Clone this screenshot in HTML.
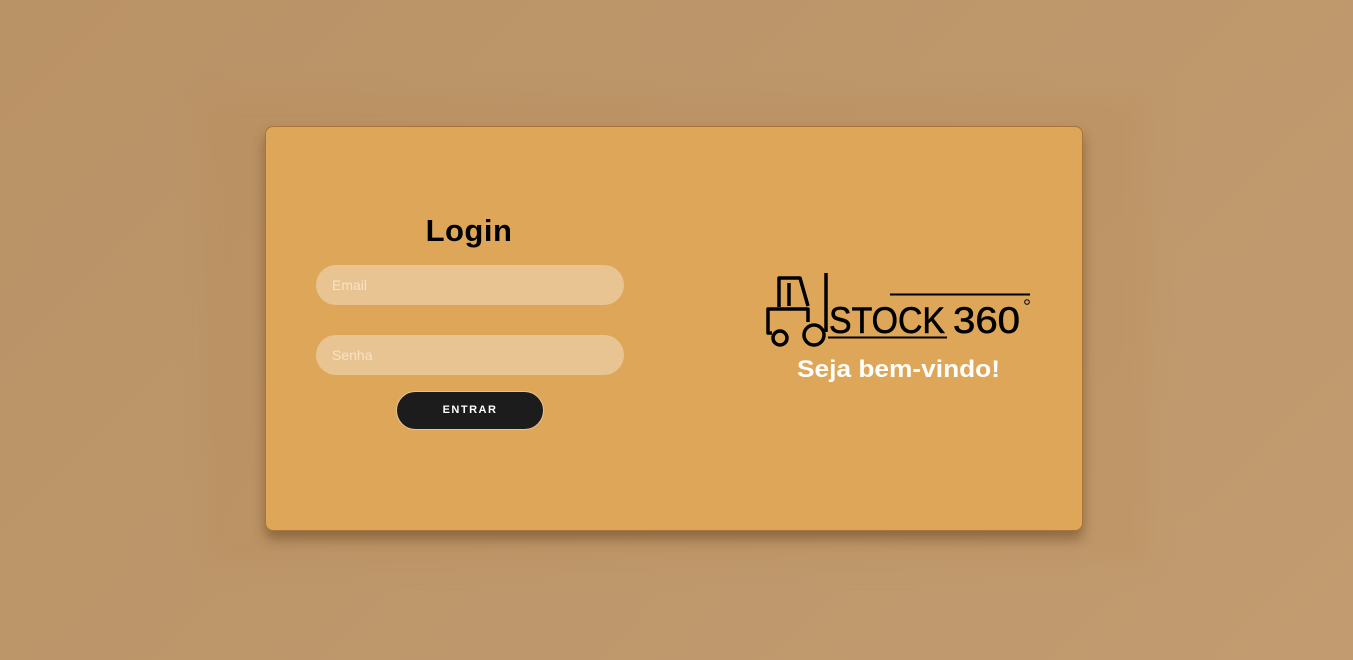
<!DOCTYPE html>
<html><head><style>
html,body{margin:0;width:1353px;height:660px;overflow:hidden}
body{background:linear-gradient(135deg,#b99266,#c29c70);font-family:"Liberation Sans",sans-serif;position:relative}
.glow{position:absolute;left:205px;top:95px;width:945px;height:470px;background:rgba(185,135,75,.18);filter:blur(12px)}
.card{position:absolute;left:265px;top:126px;width:816px;height:403px;background:#dea658;border:1px solid #a8743a;border-radius:8px;box-shadow:0 8px 12px rgba(80,50,20,.45)}
h1{position:absolute;left:0;width:408px;top:213px;margin:0;text-align:center;font-size:31px;font-weight:bold;color:#000;letter-spacing:.5px}
.in{position:absolute;left:316px;width:308px;height:40px;border-radius:20px;background:#e9c493;color:#f6e3c6;font-size:14px;line-height:40px;box-sizing:border-box;padding-left:16px}
.btn{position:absolute;left:396px;top:391px;width:148px;height:39px;border-radius:20px;background:#1c1c1c;border:1px solid #e6c48e;box-sizing:border-box;color:#fff;font-size:11px;font-weight:bold;letter-spacing:1.5px;text-align:center;line-height:37px}
</style></head><body>
<div class="glow"></div>
<div class="card"></div>
<h1 style="left:265px">Login</h1>
<div class="in" style="top:265px">Email</div>
<div class="in" style="top:335px">Senha</div>
<div class="btn">ENTRAR</div>
<svg style="position:absolute;left:760px;top:270px" width="280" height="120" viewBox="760 270 280 120">
<g fill="none" stroke="#000" stroke-width="3.5" stroke-linejoin="round">
<path d="M779 307 V278 H800 L808 306"/>
<path d="M789 283 V306"/>
<path d="M772 333 H768 V309 H808 V322"/>
<path d="M826 273 V332"/>
<circle cx="780" cy="338" r="7"/>
<circle cx="814" cy="335" r="10"/>
</g>
<line x1="890" y1="294.5" x2="1030" y2="294.5" stroke="#000" stroke-width="2"/>
<line x1="828" y1="337.5" x2="947" y2="337.5" stroke="#000" stroke-width="2"/>
<circle cx="1027" cy="302" r="2.3" fill="none" stroke="#000" stroke-width="1"/>
<text x="829" y="333" font-family="Liberation Sans" font-size="37" fill="#000" stroke="#000" stroke-width=".6" textLength="116" lengthAdjust="spacingAndGlyphs">STOCK</text>
<text x="953" y="333" font-family="Liberation Sans" font-size="37" fill="#000" stroke="#000" stroke-width=".6" textLength="67" lengthAdjust="spacingAndGlyphs">360</text>
<text x="797" y="377" font-family="Liberation Sans" font-size="24" font-weight="bold" fill="#fff" textLength="203" lengthAdjust="spacingAndGlyphs">Seja bem-vindo!</text>
</svg>
</body></html>
